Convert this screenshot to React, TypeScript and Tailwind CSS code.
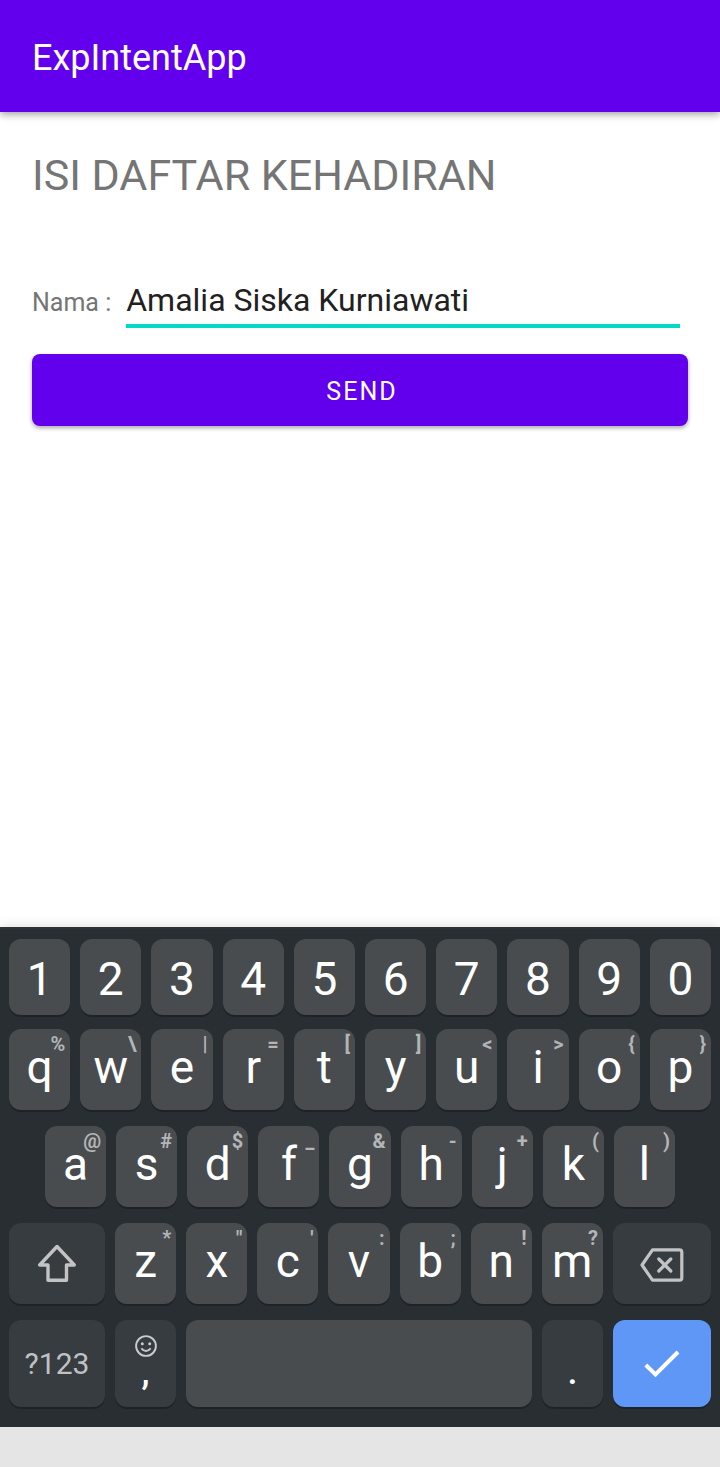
import { useState } from "react";
import type { ReactNode } from "react";

type KeyDef = { label: string; hint?: string };

const digits: KeyDef[] = "1234567890".split("").map((label) => ({ label }));

const pair = (letters: string, hints: string): KeyDef[] =>
  letters.split("").map((label, i) => ({ label, hint: hints[i] }));

const topRow = pair("qwertyuiop", "%\\|=[]<>{}");
const homeRow = pair("asdfghjkl", "@#$_&-+()");
const bottomRow = pair("zxcvbnm", "*\"':;!?");

const keyBase =
  "relative min-w-0 rounded-xl text-white shadow-[0_2px_0_#1f2327]";

function LetterKey({ label, hint }: KeyDef) {
  return (
    <button
      type="button"
      className={`${keyBase} flex items-start justify-center bg-[#484c4f] text-[46px] ${
        hint ? "h-[81px] leading-[76px]" : "h-[76px] leading-[80px]"
      }`}
    >
      {label}
      {hint && (
        <span className="absolute top-0 right-[5px] text-[20px] leading-[30px] font-bold text-[#b3b5b6]">
          {hint}
        </span>
      )}
    </button>
  );
}

function FunctionKey({
  name,
  className,
  children,
}: {
  name: string;
  className: string;
  children?: ReactNode;
}) {
  return (
    <button type="button" aria-label={name} className={`${keyBase} flex flex-col items-center ${className}`}>
      {children}
    </button>
  );
}

function ShiftIcon() {
  return (
    <svg width="40" height="40" viewBox="0 0 40 40" fill="none" stroke="#c1c3c5" strokeWidth="3.4" strokeLinejoin="round">
      <path d="M20 2.5 L2.7 21 H11 V36.2 H29.5 V21 H37.3 Z" />
    </svg>
  );
}

function BackspaceIcon() {
  return (
    <svg width="44" height="34" viewBox="0 0 44 34" fill="none" stroke="#c1c3c5" strokeWidth="3.2" strokeLinejoin="round" strokeLinecap="round">
      <path d="M12.5 1.8 H39.5 Q41.8 1.8 41.8 4 V30 Q41.8 32.2 39.5 32.2 H12.5 L2 17 Z" />
      <path d="M18.8 11 L30.8 23 M30.8 11 L18.8 23" />
    </svg>
  );
}

function SmileIcon() {
  return (
    <svg width="22" height="22" viewBox="0 0 22 22" fill="none" stroke="#c9cbcc" strokeWidth="1.9">
      <circle cx="11" cy="11" r="9.9" />
      <circle cx="7.3" cy="8.8" r="1.5" fill="#c9cbcc" stroke="none" />
      <circle cx="14.7" cy="8.8" r="1.5" fill="#c9cbcc" stroke="none" />
      <path d="M6.3 13.3 Q11 18.6 15.7 13.3" />
    </svg>
  );
}

function CheckIcon() {
  return (
    <svg width="36" height="28" viewBox="0 0 36 28" fill="none" stroke="#ffffff" strokeWidth="4">
      <path d="M1.8 15 L11.5 24.5 L34 2" />
    </svg>
  );
}

function Keyboard() {
  return (
    <section
      aria-label="Keyboard"
      className="flex flex-col gap-4 border-t-2 border-[#2d3338] bg-[#292e32] pt-[10px] pr-[9px] pb-5 pl-[9px] shadow-[0_0_12px_rgba(0,0,0,0.15)]"
    >
      <div className="-mb-0.5 grid grid-cols-10 gap-[10px]">
        {digits.map((k) => (
          <LetterKey key={k.label} {...k} />
        ))}
      </div>
      <div className="grid grid-cols-10 gap-[10px]">
        {topRow.map((k) => (
          <LetterKey key={k.label} {...k} />
        ))}
      </div>
      <div className="grid grid-cols-9 gap-[10px] px-9">
        {homeRow.map((k) => (
          <LetterKey key={k.label} {...k} />
        ))}
      </div>
      <div className="grid grid-cols-[96fr_repeat(7,61fr)_98fr] gap-[10px]">
        <FunctionKey name="Shift" className="justify-center bg-[#373c40]">
          <ShiftIcon />
        </FunctionKey>
        {bottomRow.map((k) => (
          <LetterKey key={k.label} {...k} />
        ))}
        <FunctionKey name="Backspace" className="justify-center bg-[#373c40] pt-0.5">
          <BackspaceIcon />
        </FunctionKey>
      </div>
      <div className="grid h-[87px] grid-cols-[96fr_61fr_346fr_61fr_98fr] gap-[10px]">
        <FunctionKey name="?123" className="justify-center bg-[#373c40]">
          <span className="text-[30px] leading-[36px] text-[#bfc1c3]">?123</span>
        </FunctionKey>
        <FunctionKey name="Comma and emoji" className="bg-[#373c40] pt-[15px]">
          <SmileIcon />
          <span className="text-[36px] leading-[30px] font-medium">,</span>
        </FunctionKey>
        <FunctionKey name="Space" className="bg-[#484c4f]" />
        <FunctionKey name="Period" className="bg-[#373c40] pt-[37px]">
          <span className="text-[36px] leading-[30px] font-medium">.</span>
        </FunctionKey>
        <FunctionKey name="Done" className="justify-center bg-[#5e97f6]">
          <CheckIcon />
        </FunctionKey>
      </div>
    </section>
  );
}

export default function App() {
  const [name, setName] = useState("Amalia Siska Kurniawati");
  return (
    <div className="flex min-h-screen flex-col bg-white font-[Roboto,sans-serif]">
      <header className="bg-[#6200ee] px-8 pt-[34px] pb-[30px] shadow-[0_2px_8px_rgba(0,0,0,0.4)]">
        <h1 className="text-[36px] leading-[48px] text-white">ExpIntentApp</h1>
      </header>
      <main className="flex flex-1 flex-col px-8 pt-9">
        <h2 className="text-[43px] leading-[54px] text-[#757575]">ISI DAFTAR KEHADIRAN</h2>
        <form onSubmit={(e) => e.preventDefault()} className="mt-[74px] flex flex-col">
          <div className="flex items-baseline gap-[15px] pr-2">
            <label htmlFor="nama" className="text-[25px] leading-[32px] text-[#757575]">
              Nama :
            </label>
            <input
              id="nama"
              type="text"
              value={name}
              onChange={(e) => setName(e.target.value)}
              className="h-[52px] min-w-0 flex-1 border-b-4 border-[#03dac5] text-[32px] text-[#212121] outline-none"
            />
          </div>
          <button
            type="submit"
            className="mt-[26px] h-[72px] rounded-lg bg-[#6200ee] pt-1 pl-1 text-[25px] tracking-[2px] text-white shadow-[0_2px_4px_rgba(0,0,0,0.35)]"
          >
            SEND
          </button>
        </form>
      </main>
      <Keyboard />
      <footer className="h-10 bg-[#e5e5e5]" />
    </div>
  );
}
